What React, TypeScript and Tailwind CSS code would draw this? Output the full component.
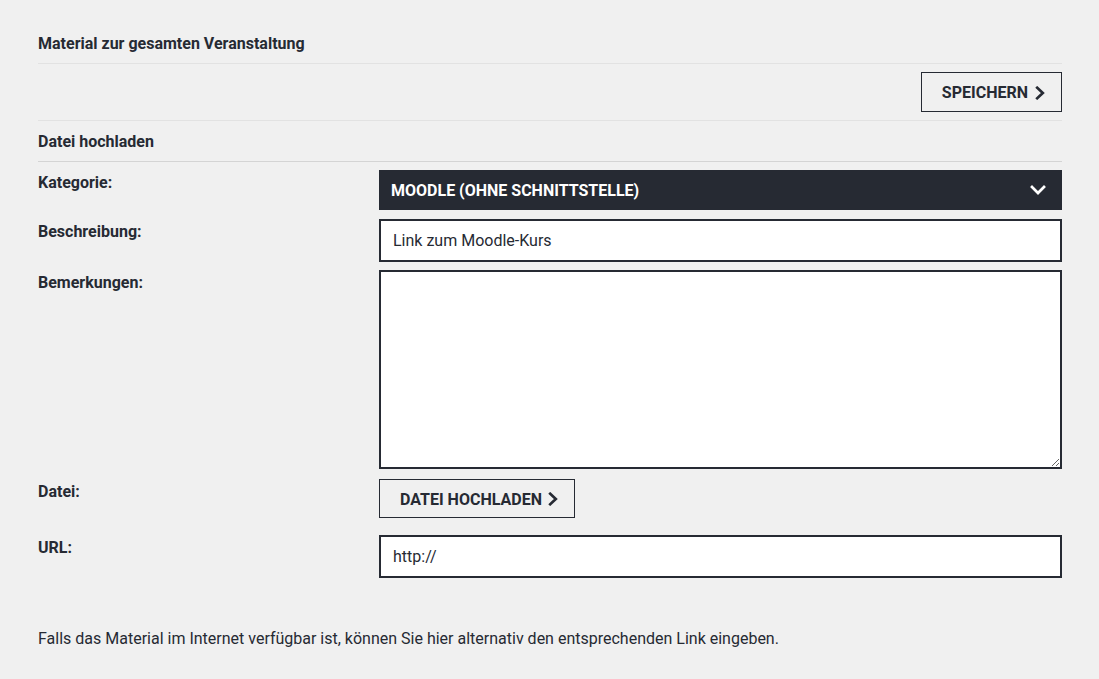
import * as React from 'react'

function Chevron({ className }: { className?: string }) {
  return (
    <svg viewBox="0 0 10 14" className={className} fill="none" stroke="currentColor" strokeWidth="2.7" strokeLinecap="square">
      <path d="M2.2 1.8 L7.8 7 L2.2 12.2" />
    </svg>
  )
}

function Row({ label, children, className }: { label: string; children: React.ReactNode; className?: string }) {
  return (
    <div className={'grid grid-cols-[341px_1fr] ' + (className ?? '')}>
      <div className="pt-[1px] text-[16px] font-bold leading-[23px]">{label}</div>
      <div>{children}</div>
    </div>
  )
}

export default function App() {
  return (
    <div
      className="min-h-[679px] bg-[#f0f0f0] text-[#262a33]"
      style={{ fontFamily: 'Roboto, "Liberation Sans", sans-serif' }}
    >
      <div className="ml-[38px] w-[1024px] pt-[33px]">
        <h2 className="pt-[1px] text-[16px] font-bold leading-[19px]">Material zur gesamten Veranstaltung</h2>
        <div className="mt-[10px] border-t border-[#e2e2e2]" />
        <div className="flex justify-end py-[8px]">
          <button
            type="button"
            className="flex h-[40px] items-center gap-[7px] border border-[#262a33] pb-[0px] pl-[20px] pr-[16px] pt-[2px] text-[16px] font-bold uppercase"
          >
            Speichern
            <Chevron className="mb-[1px] h-[14px] w-[10px]" />
          </button>
        </div>
        <div className="border-t border-[#e2e2e2]" />
        <h3 className="pt-[11px] text-[16px] font-bold leading-[19px]">Datei hochladen</h3>
        <div className="mt-[10px] border-t border-[#d4d4d4]" />

        <Row label="Kategorie:" className="mt-[8px]">
          <div className="flex h-[40px] items-center justify-between bg-[#262a33] pl-[12px] pr-[16px] pt-[2px] text-[16px] font-bold uppercase text-white">
            <span>Moodle (ohne Schnittstelle)</span>
            <svg viewBox="0 0 16 10" className="mb-[2px] h-[10px] w-[16px]" fill="none" stroke="currentColor" strokeWidth="2.7" strokeLinecap="square">
              <path d="M2 2 L8 8 L14 2" />
            </svg>
          </div>
        </Row>

        <Row label="Beschreibung:" className="mt-[9px]">
          <input
            type="text"
            defaultValue="Link zum Moodle-Kurs"
            className="block h-[43px] w-full border-2 border-[#262a33] bg-white px-[12px] text-[16px] outline-none"
          />
        </Row>

        <Row label="Bemerkungen:" className="mt-[8px]">
          <textarea className="block h-[199px] w-full resize-y border-2 border-[#262a33] bg-white px-[12px] py-[8px] text-[16px] outline-none" />
        </Row>

        <Row label="Datei:" className="mt-[10px]">
          <button
            type="button"
            className="flex h-[39px] items-center gap-[6px] border border-[#262a33] pl-[20px] pr-[16px] pt-[2px] text-[16px] font-bold uppercase"
          >
            Datei hochladen
            <Chevron className="mb-[1px] h-[14px] w-[10px]" />
          </button>
        </Row>

        <Row label="URL:" className="mt-[17px]">
          <input
            type="text"
            defaultValue="http://"
            className="block h-[43px] w-full border-2 border-[#262a33] bg-white px-[12px] text-[16px] outline-none"
          />
        </Row>

        <p className="mt-[50px] text-[16px] leading-[22px]">
          Falls das Material im Internet verfügbar ist, können Sie hier alternativ den entsprechenden Link eingeben.
        </p>
      </div>
    </div>
  )
}
